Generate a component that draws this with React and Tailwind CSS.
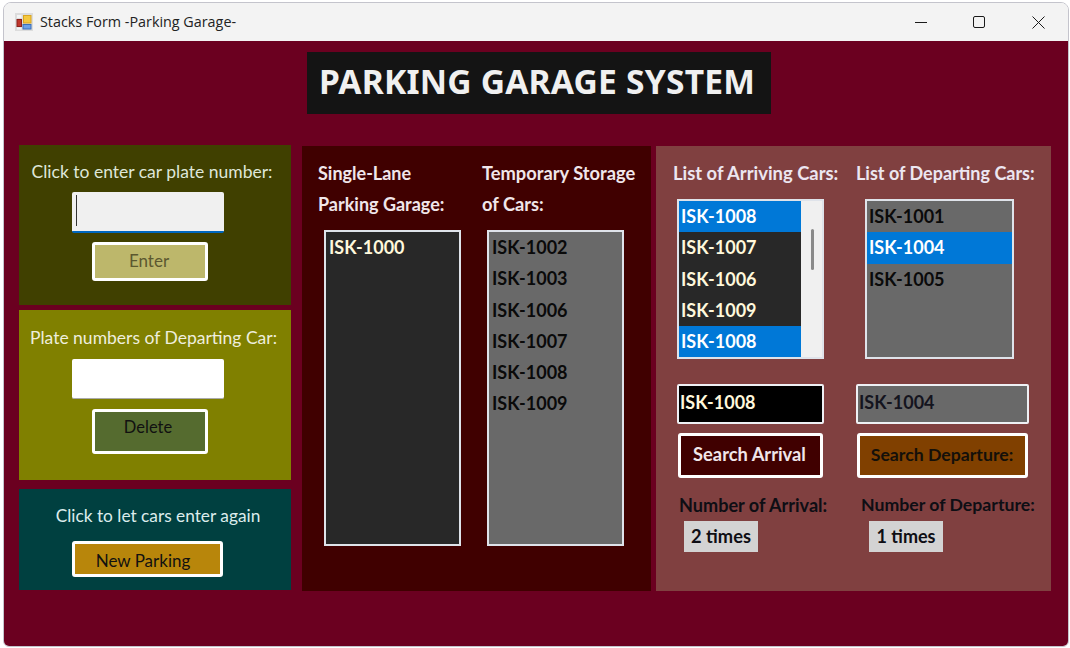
const font = { fontFamily: '"Lato", "Noto Sans", sans-serif' };

function Row({ children, tone = "plain", wide = false }) {
  const cls =
    tone === "sel"
      ? "bg-[#0078d7] text-white"
      : tone === "light"
      ? "text-[#fff8dc]"
      : "text-[#0a0a0a]";
  return (
    <div className={`h-[31.25px] leading-[31px] text-[18px] font-bold whitespace-nowrap ${wide ? "pl-[3px]" : "pl-[2px]"} ${cls}`}>
      {children}
    </div>
  );
}

function ListBox({ items, className, wide }) {
  return (
    <div className={`border-2 border-[#dfe3ea] shrink-0 overflow-hidden ${className}`}>
      {items.map((it, i) => (
        <Row key={i} tone={it[1]} wide={wide}>{it[0]}</Row>
      ))}
    </div>
  );
}

function Minimize() {
  return (
    <svg width="12" height="12" viewBox="0 0 12 12"><path d="M0 6.5h12" stroke="#1a1a1a" strokeWidth="1" /></svg>
  );
}
function Maximize() {
  return (
    <svg width="12" height="12" viewBox="0 0 12 12"><rect x="0.5" y="0.5" width="11" height="11" rx="1.5" fill="none" stroke="#1a1a1a" strokeWidth="1" /></svg>
  );
}
function Close() {
  return (
    <svg width="13" height="13" viewBox="0 0 13 13"><path d="M0.5 0.5l12 12M12.5 0.5l-12 12" stroke="#1a1a1a" strokeWidth="1" /></svg>
  );
}
function AppIcon() {
  return (
    <svg width="18" height="18" viewBox="0 0 18 18">
      <rect width="18" height="18" fill="#dcdcdc" />
      <rect x="8.5" y="2.5" width="7.5" height="7.5" fill="#f5c83e" stroke="#d9a520" />
      <rect x="2" y="6.5" width="4.5" height="7" fill="#c0362c" stroke="#8a211b" />
      <rect x="8" y="11.5" width="8" height="4.5" fill="#6aa0e8" stroke="#3c6fb8" />
      <rect x="2" y="2" width="4.5" height="3" fill="#f4f4f4" />
      <rect x="2" y="14.5" width="4.5" height="2" fill="#f4f4f4" />
    </svg>
  );
}

export default function App() {
  return (
    <div className="w-[1070px] h-[648px] bg-white pt-[2px] pl-[3px] pr-[1px] pb-[1px] overflow-hidden" style={font}>
      <div className="h-full rounded-t-[8px] rounded-b-[6px] border border-[#c4c4cc] flex flex-col overflow-hidden">
        <div className="h-[38px] bg-[#f3f3f3] flex items-center shrink-0">
          <div className="ml-[11px] -mt-[1px]"><AppIcon /></div>
          <span className="ml-[7px] text-[14.35px] text-[#222] whitespace-nowrap" style={{ fontFamily: '"Open Sans", sans-serif' }}>Stacks Form -Parking Garage-</span>
          <div className="ml-auto flex items-center">
            <div className="w-[58px] flex justify-center"><Minimize /></div>
            <div className="w-[58px] flex justify-center"><Maximize /></div>
            <div className="w-[60px] flex justify-center"><Close /></div>
          </div>
        </div>

        <div className="flex-1 bg-[#6b0020] flex flex-col">
          <div className="flex justify-start pl-[303px] pt-[11px]">
            <div className="w-[464px] h-[62px] bg-[#141414] flex items-center justify-center pr-[4px] pb-[3px] text-[#f0f0f0] text-[33.6px] font-bold tracking-[0.2px] whitespace-nowrap" style={{ fontFamily: '"Noto Sans", sans-serif' }}>
              PARKING GARAGE SYSTEM
            </div>
          </div>

          <div className="flex pl-[15px] pt-[32px]">
            {/* left column */}
            <div className="w-[272px] flex flex-col shrink-0 -mt-[1px]">
              <div className="h-[160px] bg-[#404000] flex flex-col items-center">
                <div className="mt-[16px] mr-[6px] h-[22px] leading-[22px] text-[17.5px] text-[#dfe7d8] whitespace-nowrap">Click to enter car plate number:</div>
                <div className="mt-[9px] mr-[14px] w-[152px] h-[41px] bg-[#f0f0f0] rounded-[2px] border-b-2 border-[#0067c0] pl-[4px] pt-[3px]">
                  <div className="w-[1px] h-[31px] bg-[#333]" />
                </div>
                <div className="mt-[9px] mr-[10px] w-[116px] h-[39px] bg-[#bdb76b] border-[3px] border-white rounded-[3px] flex items-center justify-center pr-[2px] pb-[2px] text-[17px] text-[#5c5830]">Enter</div>
              </div>

              <div className="mt-[5px] h-[170px] bg-[#808000] flex flex-col items-center">
                <div className="mt-[17px] mr-[3px] h-[22px] leading-[22px] text-[17.5px] text-[#eeeedd] whitespace-nowrap">Plate numbers of Departing Car:</div>
                <div className="mt-[10px] mr-[14px] w-[152px] h-[40px] bg-white rounded-[2px] border-b border-[#aaa]" />
                <div className="mt-[10px] mr-[10px] w-[116px] h-[45px] bg-[#556b2f] border-[3px] border-white rounded-[3px] flex justify-center pt-[3px] pr-[4px] text-[16.5px] leading-[24px] text-[#111]">Delete</div>
              </div>

              <div className="mt-[9px] h-[101px] bg-[#004040] flex flex-col items-center">
                <div className="mt-[16px] ml-[6px] h-[22px] leading-[22px] text-[17.3px] text-[#dcecec] whitespace-nowrap">Click to let cars enter again</div>
                <div className="mt-[14px] mr-[16px] w-[151px] h-[36px] bg-[#b8860b] border-[3px] border-white rounded-[3px] flex items-center justify-center pr-[8px] pt-[3px] text-[17px] text-[#111]">New Parking</div>
              </div>
            </div>

            {/* middle */}
            <div className="ml-[11px] w-[349px] h-[445px] bg-[#400000] shrink-0 flex">
              <div className="w-[180px] shrink-0 pl-[16px] flex flex-col">
                <div className="mt-[12px] text-[18px] leading-[31px] font-bold text-[#f0e6ea] whitespace-nowrap">Single-Lane<br />Parking Garage:</div>
                <ListBox wide className="mt-[10px] ml-[6px] w-[137px] h-[316px] bg-[#282828]" items={[["ISK-1000", "light"]]} />
              </div>
              <div className="flex-1 flex flex-col">
                <div className="mt-[12px] text-[18.3px] leading-[31px] font-bold text-[#f0e6ea] whitespace-nowrap">Temporary Storage<br />of Cars:</div>
                <ListBox wide className="mt-[10px] ml-[5px] w-[137px] h-[316px] bg-[#696969]" items={[["ISK-1002"], ["ISK-1003"], ["ISK-1006"], ["ISK-1007"], ["ISK-1008"], ["ISK-1009"]]} />
              </div>
            </div>

            {/* right */}
            <div className="ml-[5px] w-[395px] h-[445px] bg-[#804040] shrink-0 flex">
              <div className="w-[200px] shrink-0 pl-[17px] flex flex-col">
                <div className="mt-[16px] h-[22px] leading-[22px] text-[18.4px] font-bold text-[#ece6f0] whitespace-nowrap">List of Arriving Cars:</div>
                <div className="mt-[15px] ml-[4px] w-[147px] h-[160px] border-2 border-[#dfe3ea] flex">
                  <div className="w-[122px] bg-[#282828] h-full">
                    {[["ISK-1008", "sel"], ["ISK-1007", "light"], ["ISK-1006", "light"], ["ISK-1009", "light"], ["ISK-1008", "sel"]].map((it, i) => (
                      <Row key={i} tone={it[1]}>{it[0]}</Row>
                    ))}
                  </div>
                  <div className="flex-1 bg-[#f0f0f0] flex justify-center pt-[28px] pl-[1px]">
                    <div className="w-[3px] h-[41px] bg-[#8a8a8a] rounded-full" />
                  </div>
                </div>
                <div className="mt-[25px] ml-[4px] w-[147px] h-[40px] bg-black border-2 border-[#eef0f4] rounded-[2px] pl-[1px] leading-[33px] text-[18px] font-bold text-[#fff8dc] whitespace-nowrap">ISK-1008</div>
                <div className="mt-[9px] ml-[5px] w-[145px] h-[45px] bg-[#400000] border-[3px] border-white rounded-[3px] flex items-center justify-center pr-[2px] pb-[1px] text-[18.3px] font-bold text-[#f0e6ea] whitespace-nowrap">Search Arrival</div>
                <div className="mt-[16px] ml-[6px] h-[22px] leading-[22px] text-[18.1px] font-bold text-[#0e0e14] whitespace-nowrap">Number of Arrival:</div>
                <div className="mt-[5px] ml-[11px] w-[74px] h-[31px] bg-[#d3d3d3] flex items-center justify-center text-[18.3px] font-bold text-[#0e0e14]">2 times</div>
              </div>
              <div className="flex-1 flex flex-col">
                <div className="mt-[16px] h-[22px] leading-[22px] text-[18px] font-bold text-[#ece6f0] whitespace-nowrap">List of Departing Cars:</div>
                <ListBox className="mt-[15px] ml-[9px] w-[149px] h-[160px] bg-[#696969]" items={[["ISK-1001"], ["ISK-1004", "sel"], ["ISK-1005"]]} />
                <div className="mt-[25px] w-[173px] h-[40px] bg-[#696969] border-2 border-[#eef0f4] rounded-[2px] pl-[1px] leading-[33px] text-[18px] font-bold text-[#14141e] whitespace-nowrap">ISK-1004</div>
                <div className="mt-[9px] ml-[1px] w-[171px] h-[45px] bg-[#804000] border-[3px] border-white rounded-[3px] flex items-center justify-center pr-[1px] pb-[1px] text-[17.7px] font-bold text-[#14100a] whitespace-nowrap">Search Departure:</div>
                <div className="mt-[16px] ml-[5px] h-[22px] leading-[22px] text-[17.7px] font-bold text-[#0e0e14] whitespace-nowrap">Number of Departure:</div>
                <div className="mt-[5px] ml-[13px] w-[74px] h-[31px] bg-[#d3d3d3] flex items-center justify-center text-[18px] font-bold text-[#0e0e14]">1 times</div>
              </div>
            </div>
          </div>
        </div>
      </div>
    </div>
  );
}
